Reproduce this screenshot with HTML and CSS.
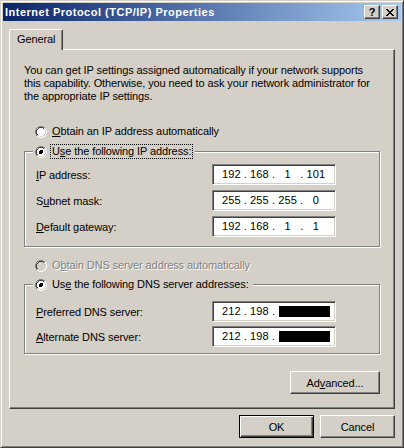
FILE: index.html
```html
<!DOCTYPE html>
<html>
    <head>
        <title>Internet Protocol (TCP/IP) Properties</title>
        <link rel="stylesheet" href="styles.css">
    </head>
    <body>
        <svg class="defs" width="0" height="0">
            <defs>
                <symbol id="radio-ring" viewBox="0 0 12 12">
                    <path d="M2.11 9.89A5.5 5.5 0 0 1 9.89 2.11" stroke="#808080" fill="none"/>
                    <path d="M9.89 2.11A5.5 5.5 0 0 1 2.11 9.89" stroke="#ffffff" fill="none"/>
                    <path d="M2.82 9.18A4.5 4.5 0 0 1 9.18 2.82" stroke="#404040" fill="none"/>
                    <path d="M9.18 2.82A4.5 4.5 0 0 1 2.82 9.18" stroke="#d4d0c8" fill="none"/>
                </symbol>
            </defs>
        </svg>

        <div class="window">
            <div class="titlebar">
                <span class="title">Internet Protocol (TCP/IP) Properties</span>
                <span class="cap-btn">?</span>
                <span class="cap-btn close">
                    <svg width="8" height="7" viewBox="0 0 8 7">
                        <path d="M0 0h2v1h-2z M6 0h2v1h-2z M1 1h2v1h-2z M5 1h2v1h-2z M2 2h4v1h-4z M3 3h2v1h-2z M2 4h4v1h-4z M1 5h2v1h-2z M5 5h2v1h-2z M0 6h2v1h-2z M6 6h2v1h-2z"/>
                    </svg>
                </span>
            </div>

            <div class="client">
                <div class="tabs">
                    <div class="tab">General</div>
                </div>

                <div class="panel">
                    <p class="intro">You can get IP settings assigned automatically if your network supports<br>this capability. Otherwise, you need to ask your network administrator for<br>the appropriate IP settings.</p>

                    <div class="option first">
                        <svg class="radio" width="12" height="12" viewBox="0 0 12 12"><circle class="radio-bg" cx="6" cy="6" r="4.5"/><use href="#radio-ring"/></svg>
                        <span class="label"><u>O</u>btain an IP address automatically</span>
                    </div>

                    <div class="group ip-group">
                        <div class="option legend">
                            <svg class="radio" width="12" height="12" viewBox="0 0 12 12"><circle class="radio-bg" cx="6" cy="6" r="4.5"/><use href="#radio-ring"/><circle class="radio-dot" cx="6" cy="6" r="2"/></svg>
                            <span class="label focused">U<u>s</u>e the following IP address:</span>
                        </div>
                        <div class="field-row">
                            <span><u>I</u>P address:</span>
                            <span class="ip-box">192 . 168 .   1   . 101</span>
                        </div>
                        <div class="field-row">
                            <span>S<u>u</u>bnet mask:</span>
                            <span class="ip-box">255 . 255 . 255 .   0</span>
                        </div>
                        <div class="field-row">
                            <span><u>D</u>efault gateway:</span>
                            <span class="ip-box">192 . 168 .   1   .   1</span>
                        </div>
                    </div>

                    <div class="option disabled">
                        <svg class="radio" width="12" height="12" viewBox="0 0 12 12"><circle class="radio-bg" cx="6" cy="6" r="4.5"/><use href="#radio-ring"/></svg>
                        <span class="label">O<u>b</u>tain DNS server address automatically</span>
                    </div>

                    <div class="group dns-group">
                        <div class="option legend">
                            <svg class="radio" width="12" height="12" viewBox="0 0 12 12"><circle class="radio-bg" cx="6" cy="6" r="4.5"/><use href="#radio-ring"/><circle class="radio-dot" cx="6" cy="6" r="2"/></svg>
                            <span class="label">Us<u>e</u> the following DNS server addresses:</span>
                        </div>
                        <div class="field-row">
                            <span><u>P</u>referred DNS server:</span>
                            <span class="ip-box">212 . 198 . <span class="hidden-part"></span></span>
                        </div>
                        <div class="field-row">
                            <span><u>A</u>lternate DNS server:</span>
                            <span class="ip-box">212 . 198 . <span class="hidden-part"></span></span>
                        </div>
                    </div>

                    <div class="panel-actions">
                        <span class="button advanced">Ad<u>v</u>anced...</span>
                    </div>
                </div>

                <div class="dialog-buttons">
                    <span class="button default">OK</span>
                    <span class="button">Cancel</span>
                </div>
            </div>
        </div>
    </body>
</html>
```

FILE: styles.css
```css
body {
    margin: 0;
    padding: 0;
    background-color: #D4D0C8;
    font-family: "Liberation Sans", Arial, sans-serif;
    font-size: 11px;
    letter-spacing: -0.1px;
    color: #000;
}

.defs {
    display: block;
    width: 0;
    height: 0;
}

/* window frame: light / white on top-left, dark / shadow on bottom-right */
.window {
    width: 404px;
    height: 448px;
    box-sizing: border-box;
    border: 1px solid;
    border-color: #D4D0C8 #404040 #404040 #D4D0C8;
    box-shadow: inset 1px 1px #FFF, inset -1px -1px #808080;
    padding: 2px;
    background-color: #D4D0C8;
}

.titlebar {
    height: 18px;
    display: flex;
    align-items: center;
    padding-left: 2px;
    padding-right: 3px;
    background: linear-gradient(to right, #0A246A, #A6CAF0);
}

.title {
    flex: 1;
    color: #FFF;
    font-weight: bold;
    letter-spacing: 0.5px;
    line-height: 18px;
    white-space: nowrap;
}

.cap-btn {
    width: 16px;
    height: 14px;
    box-sizing: border-box;
    border: 1px solid;
    border-color: #FFF #404040 #404040 #FFF;
    box-shadow: inset -1px -1px #808080;
    background-color: #D4D0C8;
    display: flex;
    align-items: center;
    justify-content: center;
    font-weight: bold;
    font-size: 11px;
    line-height: 12px;
}

.cap-btn.close {
    margin-left: 2px;
}

.cap-btn svg {
    display: block;
    shape-rendering: crispEdges;
}

.client {
    padding: 8px 6px 0 6px;
}

.tabs {
    display: flex;
}

.tab {
    position: relative;
    z-index: 1;
    width: 54px;
    height: 21px;
    margin-bottom: -1px;
    box-sizing: border-box;
    border: 1px solid;
    border-bottom: none;
    border-color: #FFF #404040 #FFF #FFF;
    border-radius: 2px 2px 0 0;
    box-shadow: inset -1px 0 #808080;
    background-color: #D4D0C8;
    padding: 0 0 1px 7px;
    line-height: 19px;
}

.panel {
    height: 360px;
    box-sizing: border-box;
    border: 1px solid;
    border-color: #FFF #404040 #404040 #FFF;
    box-shadow: inset -1px -1px #808080;
    padding: 14px 14px 0 14px;
}

.intro {
    margin: 0;
    line-height: 13px;
    white-space: nowrap;
}

.option {
    display: flex;
    align-items: center;
    height: 15px;
    padding-left: 11px;
}

.option.first {
    margin-top: 21px;
}

.option.disabled {
    margin-top: 11px;
    color: #808080;
}

.option.disabled .label {
    text-shadow: 1px 1px #FFF;
}

.radio {
    display: block;
    flex: none;
    shape-rendering: crispEdges;
}

.radio-bg {
    fill: #FFF;
}

.option.disabled .radio-bg {
    fill: #D4D0C8;
}

.radio-dot {
    fill: #000;
}

.label {
    margin-left: 3px;
    padding: 0 1px;
    border: 1px solid transparent;
    line-height: 13px;
    white-space: nowrap;
}

.label.focused {
    border: 1px dotted #000;
}

/* etched group box */
.group {
    border: 1px solid #808080;
    box-shadow: inset 1px 1px #FFF, 1px 1px #FFF;
    padding: 0 43px 0 0;
}

.ip-group {
    margin-top: 12px;
    padding-bottom: 9px;
}

.dns-group {
    margin-top: 11px;
    padding-bottom: 6px;
}

.group .legend {
    width: fit-content;
    margin-top: -8px;
    margin-left: 8px;
    padding: 0 2px;
    background-color: #D4D0C8;
}

.field-row {
    display: flex;
    align-items: center;
    justify-content: space-between;
    height: 21px;
    padding-left: 11px;
    margin-top: 5px;
}

.dns-group .field-row {
    margin-top: 4px;
}

.dns-group .legend + .field-row {
    margin-top: 9px;
}

.ip-box {
    width: 124px;
    height: 21px;
    box-sizing: border-box;
    border: 1px solid;
    border-color: #808080 #FFF #FFF #808080;
    box-shadow: inset 1px 1px #404040, inset -1px -1px #D4D0C8;
    background-color: #FFF;
    padding-left: 9px;
    letter-spacing: 0.1px;
    line-height: 19px;
    white-space: pre;
    display: flex;
    align-items: center;
}

.hidden-part {
    display: inline-block;
    width: 51px;
    height: 11px;
    margin-left: 1px;
    background-color: #000;
}

.panel-actions {
    display: flex;
    justify-content: flex-end;
    margin-top: 17px;
}

.button {
    width: 75px;
    height: 23px;
    box-sizing: border-box;
    border: 1px solid;
    border-color: #FFF #404040 #404040 #FFF;
    box-shadow: inset -1px -1px #808080;
    display: flex;
    align-items: center;
    justify-content: center;
    background-color: #D4D0C8;
}

.button.advanced {
    width: 90px;
}

.button.default {
    border-color: #000;
    box-shadow: inset 1px 1px #FFF, inset -1px -1px #404040, inset -2px -2px #808080;
}

.dialog-buttons {
    display: flex;
    justify-content: flex-end;
    gap: 6px;
    margin-top: 6px;
}
```
